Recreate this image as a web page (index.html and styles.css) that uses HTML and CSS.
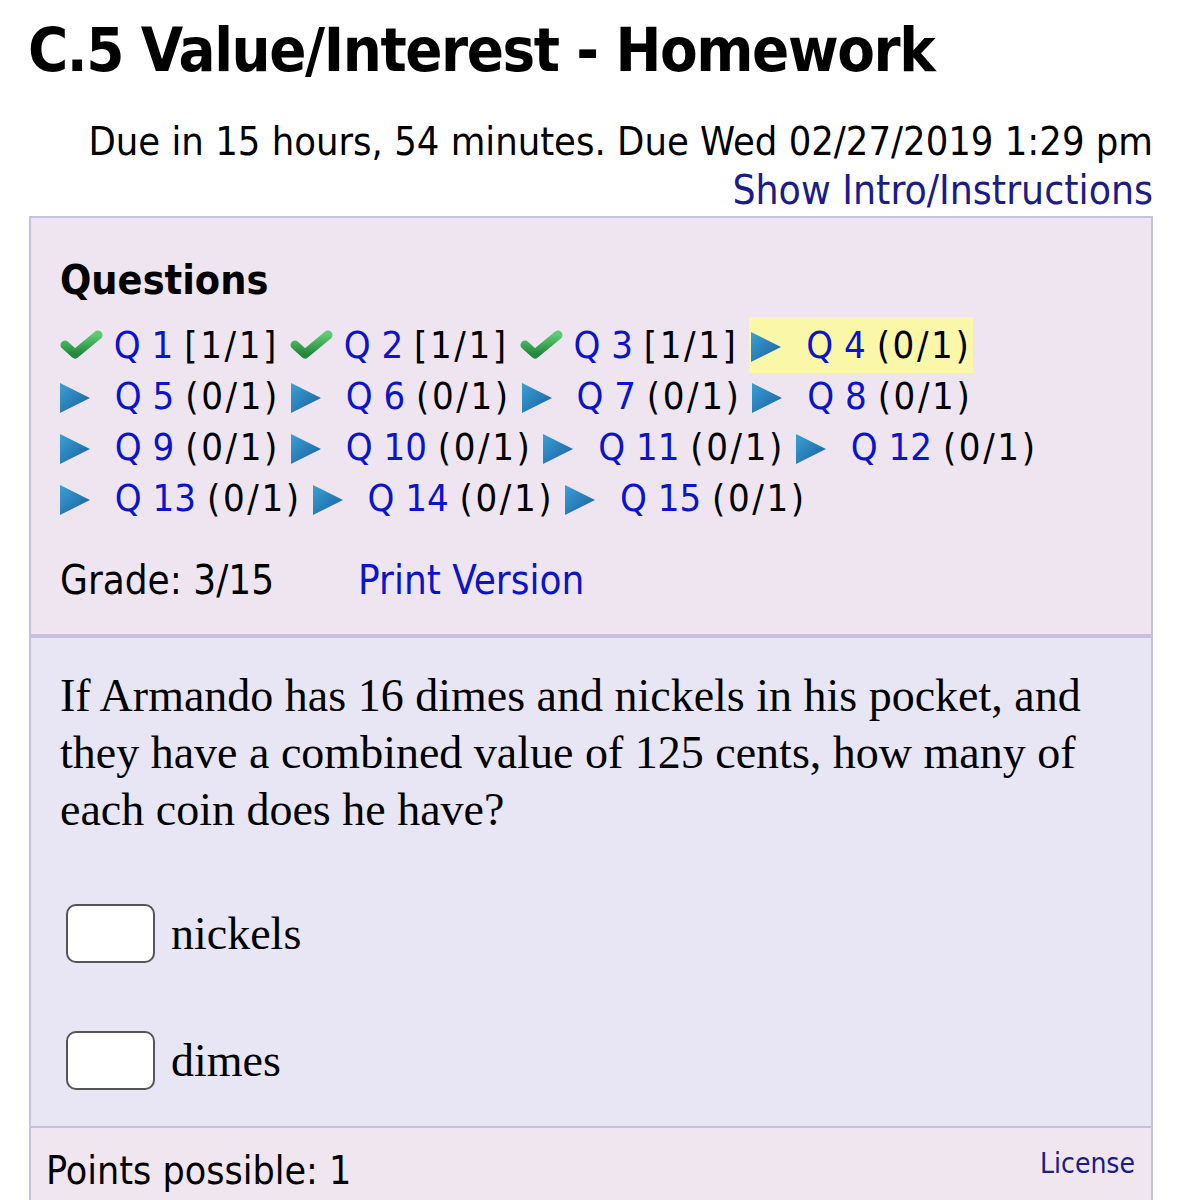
FILE: index.html
```html
<!DOCTYPE html>
<html>
<head>
<meta charset="utf-8">
<link rel="stylesheet" href="styles.css">
</head>
<body>
<h1 class="title">C.5 Value/Interest - Homework</h1>
<div class="due">Due in 15 hours, 54 minutes. Due Wed 02/27/2019 1:29 pm</div>
<div class="intro"><a href="#">Show Intro/Instructions</a></div>
<div class="box">
  <div class="qpanel">
    <h2 class="qhead">Questions</h2>
    <div class="qlist">
      <span class="qi"><svg class="chk" viewBox="0 0 43 30"><defs><linearGradient id="g" x1="0" y1="0" x2="0" y2="1"><stop offset="0" stop-color="#5ccb72"/><stop offset="1" stop-color="#23883a"/></linearGradient></defs><polyline points="5,15 15,24 38,5" fill="none" stroke="url(#g)" stroke-width="9" stroke-linecap="round" stroke-linejoin="round"/></svg> <a href="#">Q 1</a> <span class="sc">[1/1]</span></span>
      <span class="qi"><svg class="chk" viewBox="0 0 43 30"><polyline points="5,15 15,24 38,5" fill="none" stroke="url(#g)" stroke-width="9" stroke-linecap="round" stroke-linejoin="round"/></svg> <a href="#">Q 2</a> <span class="sc">[1/1]</span></span>
      <span class="qi"><svg class="chk" viewBox="0 0 43 30"><polyline points="5,15 15,24 38,5" fill="none" stroke="url(#g)" stroke-width="9" stroke-linecap="round" stroke-linejoin="round"/></svg> <a href="#">Q 3</a> <span class="sc">[1/1]</span></span>
      <span class="qi cur"><svg class="tri" viewBox="0 0 30 30"><defs><linearGradient id="b" x1="0" y1="0" x2="1" y2="1"><stop offset="0" stop-color="#3aa0d6"/><stop offset="1" stop-color="#1a5f9c"/></linearGradient></defs><path d="M0 0 L30 15 L0 30 Z" fill="url(#b)"/></svg> <a href="#">Q 4</a> <span class="sc">(0/1)</span></span>
      <span class="qi"><svg class="tri" viewBox="0 0 30 30"><path d="M0 0 L30 15 L0 30 Z" fill="url(#b)"/></svg> <a href="#">Q 5</a> <span class="sc">(0/1)</span></span>
      <span class="qi"><svg class="tri" viewBox="0 0 30 30"><path d="M0 0 L30 15 L0 30 Z" fill="url(#b)"/></svg> <a href="#">Q 6</a> <span class="sc">(0/1)</span></span>
      <span class="qi"><svg class="tri" viewBox="0 0 30 30"><path d="M0 0 L30 15 L0 30 Z" fill="url(#b)"/></svg> <a href="#">Q 7</a> <span class="sc">(0/1)</span></span>
      <span class="qi"><svg class="tri" viewBox="0 0 30 30"><path d="M0 0 L30 15 L0 30 Z" fill="url(#b)"/></svg> <a href="#">Q 8</a> <span class="sc">(0/1)</span></span>
      <span class="qi"><svg class="tri" viewBox="0 0 30 30"><path d="M0 0 L30 15 L0 30 Z" fill="url(#b)"/></svg> <a href="#">Q 9</a> <span class="sc">(0/1)</span></span>
      <span class="qi"><svg class="tri" viewBox="0 0 30 30"><path d="M0 0 L30 15 L0 30 Z" fill="url(#b)"/></svg> <a href="#">Q 10</a> <span class="sc">(0/1)</span></span>
      <span class="qi"><svg class="tri" viewBox="0 0 30 30"><path d="M0 0 L30 15 L0 30 Z" fill="url(#b)"/></svg> <a href="#">Q 11</a> <span class="sc">(0/1)</span></span>
      <span class="qi"><svg class="tri" viewBox="0 0 30 30"><path d="M0 0 L30 15 L0 30 Z" fill="url(#b)"/></svg> <a href="#">Q 12</a> <span class="sc">(0/1)</span></span>
      <span class="qi"><svg class="tri" viewBox="0 0 30 30"><path d="M0 0 L30 15 L0 30 Z" fill="url(#b)"/></svg> <a href="#">Q 13</a> <span class="sc">(0/1)</span></span>
      <span class="qi"><svg class="tri" viewBox="0 0 30 30"><path d="M0 0 L30 15 L0 30 Z" fill="url(#b)"/></svg> <a href="#">Q 14</a> <span class="sc">(0/1)</span></span>
      <span class="qi"><svg class="tri" viewBox="0 0 30 30"><path d="M0 0 L30 15 L0 30 Z" fill="url(#b)"/></svg> <a href="#">Q 15</a> <span class="sc">(0/1)</span></span>
    </div>
    <div class="grade"><span>Grade: 3/15</span><a href="#">Print Version</a></div>
  </div>
  <div class="question">
    <p class="qtext">If Armando has 16 dimes and nickels in his pocket, and they have a combined value of 125 cents, how many of each coin does he have?</p>
    <div class="ans"><span class="inp"></span><span>nickels</span></div>
    <div class="ans last"><span class="inp"></span><span>dimes</span></div>
  </div>
  <div class="foot"><span>Points possible: 1</span><a href="#" class="lic">License</a></div>
</div>
</body>
</html>
```
FILE: styles.css
```css
html, body { margin: 0; padding: 0; background: #fff; }
body { font-family: "DejaVu Sans Condensed", "DejaVu Sans", sans-serif; color: #000; width: 1198px; height: 1200px; overflow: hidden; }
a { text-decoration: none; }
.title { font-size: 61px; letter-spacing: -1.4px; font-weight: bold; margin: 0; padding: 12px 0 0 28px; line-height: 76px; }
.due { font-size: 39.5px; text-align: right; width: 1153px; margin-top: 30px; line-height: 46px; }
.intro { font-size: 40.5px; text-align: right; width: 1153px; line-height: 52px; }
.intro a { color: #1b1b8a; }
.box { margin-left: 29px; width: 1120px; border-left: 2px solid #c4c0e2; border-right: 2px solid #c4c0e2; border-top: 2px solid #c4c0e2; }
.qpanel { background: #efe5f0; padding: 36px 29px 30px 29px; border-bottom: 4px solid #c4c0e0; }
.qhead { font-size: 41px; font-weight: bold; margin: 0 0 14px 0; line-height: 52px; }
.qlist { font-size: 38px; line-height: 51px; }
.qlist a { color: #0a14c8; }
.sc { letter-spacing: 2.6px; }
.qi { white-space: nowrap; }
.cur { background: #fbf7a8; padding: 6px 2px 6px 2px; }
.chk { width: 43px; height: 30px; vertical-align: -2px; }
.tri { width: 30px; height: 30px; vertical-align: -4px; margin-right: 14px; }
.grade { font-size: 40px; margin-top: 32px; line-height: 48px; display: flex; gap: 84px; }
.grade a { color: #0a14c8; }
.question { background: #e8e6f4; padding: 29px 29px 36px 29px; border-bottom: 2px solid #c4c0e2; }
.qtext { font-family: "Liberation Serif", serif; font-size: 46px; line-height: 57px; margin: 0 0 66px 0; }
.ans { display: flex; align-items: center; gap: 16px; font-family: "Liberation Serif", serif; font-size: 46px; margin: 0 0 68px 6px; }
.ans.last { margin-bottom: 0; }
.inp { display: inline-block; width: 85px; height: 55px; background: #fff; border: 2px solid #555; border-radius: 10px; }
.foot { background: #f0e6f0; display: flex; justify-content: space-between; align-items: flex-start; padding: 20px 16px 20px 15px; font-size: 39px; line-height: 46px; }
.lic { font-size: 28px; color: #1b1b8a; line-height: 32px; }
```
